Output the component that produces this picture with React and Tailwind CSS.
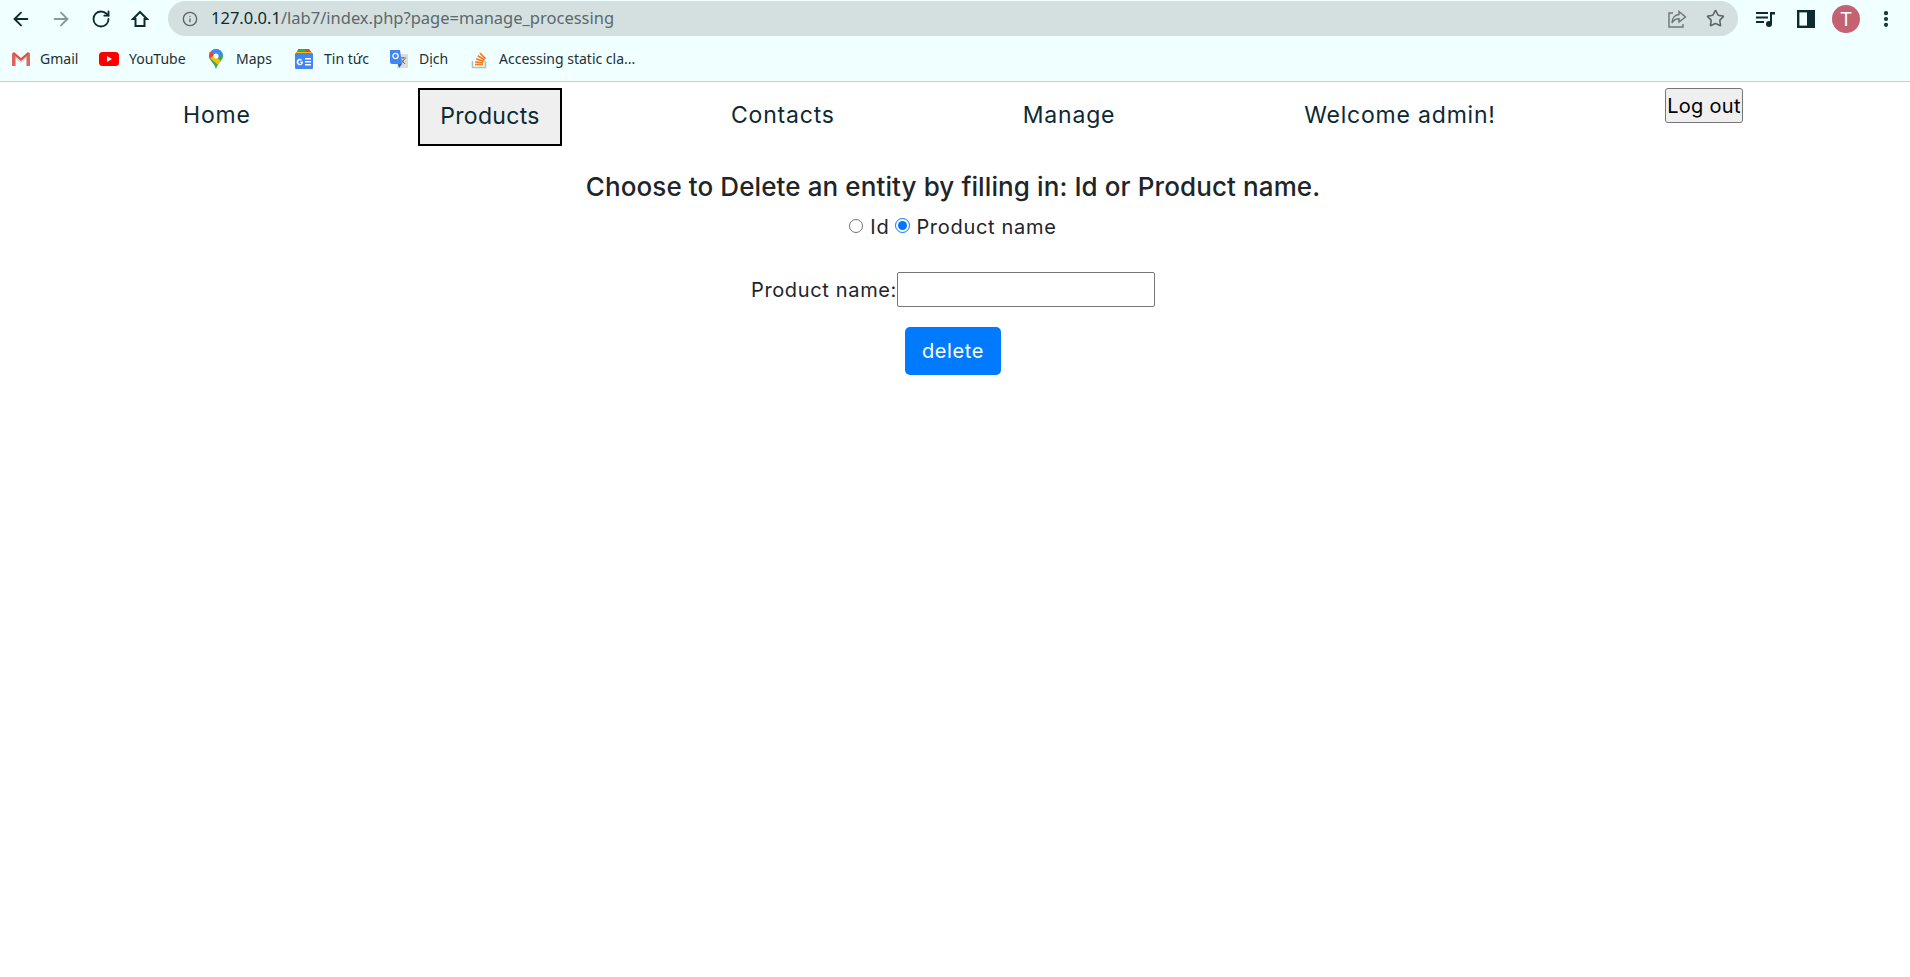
import React from 'react';
import { ArrowLeft, ArrowRight, RotateCw, Info, Star, EllipsisVertical } from 'lucide-react';

const poppins = "font-['Inter','Noto_Sans',sans-serif]";

const GmailIcon = () => (
  <svg width="20" height="16" viewBox="0 0 20 16">
    <path d="M1 15V3l9 7 9-7v12h-3.500V7.500L10 12 4.500 7.500V15z" fill="#d9d9d9" />
    <path d="M1 15V2.500L4.500 5v10z" fill="#e0605a" />
    <path d="M19 15V2.500L15.500 5v10z" fill="#dc6a5f" />
    <path d="M1 2.500 3 1l7 6 7-6 2 1.500L10 10z" fill="#d9534a" />
  </svg>
);

const YoutubeIcon = () => (
  <svg width="20" height="14" viewBox="0 0 20 14">
    <rect width="20" height="14" rx="3.500" fill="#f00" />
    <path d="M8 4v6l5-3z" fill="#fff" />
  </svg>
);

const MapsIcon = () => (
  <svg width="16" height="20" viewBox="0 0 16 20">
    <path d="M8 0a7 7 0 0 1 7 7c0 4-4.500 6-7 13C5.500 13 1 11 1 7a7 7 0 0 1 7-7z" fill="#34a853" />
    <path d="M2 3 13 12l-3 4L2 9z" fill="#fbbc04" />
    <path d="M3 2.500A7 7 0 0 1 8 0v4.500L5 6z" fill="#4285f4" />
    <path d="M8 0a7 7 0 0 1 7 6l-4 1-3-3z" fill="#4285f4" />
    <path d="M2 2.500 6 6 2 9.500C1 7 1 4.500 2 2.500z" fill="#ea4335" />
    <circle cx="8" cy="7" r="2.600" fill="#fff" />
  </svg>
);

const NewsIcon = () => (
  <svg width="20" height="20" viewBox="0 0 20 20">
    <path d="M3 3 4 0h11l2 3z" fill="#34a853" />
    <path d="M11 0h4l2 3h-5z" fill="#ea4335" />
    <path d="M2 3h16v2H2z" fill="#fbbc04" />
    <rect x="1" y="4" width="18" height="16" rx="1" fill="#4285f4" />
    <rect x="11" y="9" width="6" height="1.500" fill="#fff" />
    <rect x="11" y="12" width="6" height="1.500" fill="#fff" />
    <rect x="11" y="15" width="6" height="1.500" fill="#fff" />
    <path d="M9 12.500H6.500v1.500h1a1.700 1.700 0 1 1-.5-2.300l1-1A3.200 3.200 0 1 0 9 13z" fill="#fff" />
  </svg>
);

const TranslateIcon = () => (
  <svg width="20" height="20" viewBox="0 0 20 20">
    <rect x="8" y="5" width="11" height="14" rx="1" fill="#dcdcdc" />
    <path d="M11 9h6M14 8v1M12 15l3.500-5M12 10.500l4 4.500" stroke="#666" strokeWidth="1" fill="none" />
    <path d="M1 1h10l2 14H3a2 2 0 0 1-2-2z" fill="#4285f4" />
    <circle cx="6.500" cy="7" r="2.600" fill="none" stroke="#fff" strokeWidth="1.300" />
    <path d="M13 15l-3 4-1-4z" fill="#2f5fc0" />
  </svg>
);

const StackIcon = () => (
  <svg width="18" height="20" viewBox="0 0 18 20">
    <path d="M1.500 12v6.500h13V12" fill="none" stroke="#bcbbbb" strokeWidth="1.600" />
    <g stroke="#f48024" strokeWidth="1.800">
      <path d="M4 15.500h8" />
      <path d="M4.300 12.800l7.900 1" />
      <path d="M5.200 9.800l7.600 2.500" />
      <path d="M6.800 6.800l6.800 4.200" />
      <path d="M9 4l5.500 5.800" />
    </g>
  </svg>
);

const HomeIcon = () => (
  <svg width="18" height="18" viewBox="0 0 18 18" fill="none" stroke="#0d2b2f" strokeWidth="2">
    <path d="M9 2 2 9h2.500v7h9V9H16z" strokeLinejoin="miter" />
  </svg>
);

const ShareIcon = () => (
  <svg width="20" height="20" viewBox="0 0 20 20" fill="none" stroke="#6b7375" strokeWidth="1.400">
    <path d="M6 4H2v14h14v-3" />
    <path d="M12 2.500 18.500 8 12 13v-3.200C9 9.800 6.500 11 5 14c0-5 3-8.200 7-8.500z" />
  </svg>
);

const QueueIcon = () => (
  <svg width="20" height="18" viewBox="0 0 20 18" fill="#0d2b2f">
    <rect x="0" y="2" width="12" height="2" />
    <rect x="0" y="6.500" width="12" height="2" />
    <rect x="0" y="11" width="8" height="2" />
    <path d="M14 2h5v2.500h-3V14h-2z" />
    <circle cx="13" cy="14" r="3" />
  </svg>
);

const SidePanelIcon = () => (
  <svg width="18" height="18" viewBox="0 0 18 18">
    <rect x="1.200" y="1.200" width="15.600" height="15.600" fill="none" stroke="#0d2b2f" strokeWidth="2.400" />
    <rect x="10" y="1" width="8" height="16" fill="#0d2b2f" />
  </svg>
);

const bookmarks = [
  { label: 'Gmail', icon: <GmailIcon />, box: 'w-[99px] pl-[11px]', gap: 'gap-[9px]' },
  { label: 'YouTube', icon: <YoutubeIcon />, box: 'w-[109px]', gap: 'gap-[10px]' },
  { label: 'Maps', icon: <MapsIcon />, box: 'w-[86px]', gap: 'gap-[12px]' },
  { label: 'Tin tức', icon: <NewsIcon />, box: 'w-[95px]', gap: 'gap-[10px]' },
  { label: 'Dịch', icon: <TranslateIcon />, box: 'w-[82px]', gap: 'gap-[10px]' },
  { label: 'Accessing static cla...', icon: <StackIcon />, box: '', gap: 'gap-[10px]' },
];

const BrowserBar = () => (
  <div className="h-[82px] bg-[#f0ffff] border-b border-[#c5d3d3] font-['Noto_Sans',sans-serif]">
    <div className="flex items-center h-[36px] pt-[1px]">
      <div className="flex items-center w-[168px] pl-[10px] text-[#0d2b2f]">
        <ArrowLeft size={22} strokeWidth={2} />
        <ArrowRight size={22} strokeWidth={2} className="ml-[18px] text-[#87989a]" />
        <RotateCw size={20} strokeWidth={2.200} className="ml-[19px]" />
        <span className="ml-[20px]"><HomeIcon /></span>
      </div>
      <div className="flex items-center w-[1570px] h-[35px] rounded-full bg-[#d4e0e0] pl-[14px] pr-[13px]">
        <Info size={16} strokeWidth={2} className="text-[#5a6466]" />
        <span className="ml-[13px] text-[16.500px] leading-none text-[#0d2b2f]">127.0.0.1<span className="text-[#5c686a]">/lab7/index.php?page=manage_processing</span></span>
        <span className="ml-auto"><ShareIcon /></span>
        <Star size={19} strokeWidth={2} className="ml-[19px] text-[#5a6466]" />
      </div>
      <div className="flex items-center ml-[18px]"><QueueIcon /></div>
      <div className="flex items-center ml-[21px]"><SidePanelIcon /></div>
      <div className="flex items-center justify-center ml-[17px] w-[28px] h-[28px] rounded-full bg-[#c46272] text-white text-[20px]">T</div>
      <EllipsisVertical size={20} strokeWidth={3} className="ml-[16px] text-[#0d2b2f]" />
    </div>
    <div className="flex items-center h-[37px] mt-[4px] text-[14px] text-[#1d2f33]">
      {bookmarks.map((b) => (
        <div key={b.label} className={`flex items-center ${b.gap} ${b.box} shrink-0`}>
          {b.icon}
          <span>{b.label}</span>
        </div>
      ))}
    </div>
  </div>
);

const NavBar = () => (
  <nav className={`flex items-start h-[70px] pt-[6px] text-[#0c2a33] text-[23px] tracking-[0.8px] ${poppins}`}>
    <a className="ml-[183px] mt-[10px] w-[67px] text-center whitespace-nowrap">Home</a>
    <a className="ml-[168px] w-[144px] h-[58px] pb-[2px] flex items-center justify-center bg-[#efefef] border-2 border-black tracking-[0.3px]">Products</a>
    <a className="ml-[169px] mt-[10px] w-[103px] text-center whitespace-nowrap">Contacts</a>
    <a className="ml-[188px] mt-[10px] w-[94px] text-center whitespace-nowrap">Manage</a>
    <a className="ml-[187px] mt-[10px] w-[194px] text-center whitespace-nowrap">Welcome admin!</a>
    <button className="ml-[168px] w-[78px] h-[35px] bg-[#efefef] border border-[#767676] rounded-[3px] text-black text-[20px] tracking-[0.3px] leading-none">Log out</button>
  </nav>
);

const DeleteForm = () => (
  <form className={`flex flex-col items-center pr-[4px] text-[#212529] ${poppins}`}>
    <h3 className="text-[26px] tracking-[0.1px] font-medium leading-[36px] mt-[17px]">Choose to Delete an entity by filling in: Id or Product name.</h3>
    <div className="flex items-center h-[30px] mt-[7px] text-[20px] tracking-[0.7px]">
      <input type="radio" name="mode" className="w-[14px] h-[14px] mb-[3px] accent-[#0075ff]" />
      <span className="ml-[7px]">Id</span>
      <input type="radio" name="mode" defaultChecked className="w-[15px] h-[15px] ml-[6px] mb-[3px] accent-[#0075ff]" />
      <span className="ml-[6px]">Product name</span>
    </div>
    <div className="flex items-center mt-[30px] text-[20px] tracking-[0.65px]">
      <label>Product name:</label>
      <input type="text" className="w-[258px] h-[35px] border border-[#767676] rounded-[2px] bg-white" />
    </div>
    <button type="button" className="mt-[20px] w-[96px] h-[48px] rounded-[5px] bg-[#007bff] text-white text-[20px] tracking-[0.6px]">delete</button>
  </form>
);

export default function App() {
  return (
    <div className="min-h-[977px] bg-white">
      <BrowserBar />
      <NavBar />
      <DeleteForm />
    </div>
  );
}
